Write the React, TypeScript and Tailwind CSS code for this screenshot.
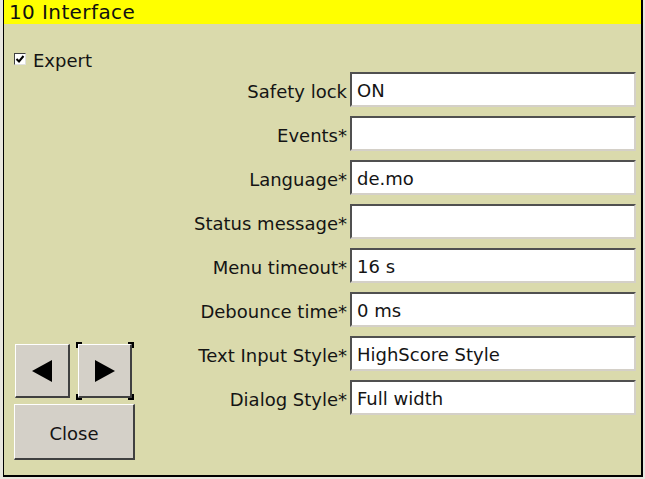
import React from "react";

const font = { fontFamily: '"DejaVu Sans", Verdana, sans-serif' };

function Field({ label, value }: { label: string; value: string }) {
  return (
    <div className="flex items-center justify-end h-[34px]">
      <span className="text-[18px] leading-none text-[#141414] mr-[3px] pt-[5px]">{label}</span>
      <div className="w-[286px] h-[35px] bg-white border-t-2 border-l-2 border-b-2 border-r-2 border-t-[#505050] border-l-[#505050] border-b-[#d4d0c8] border-r-[#d4d0c8] flex items-center pl-[5px] pt-[3px] text-[18px] leading-none text-[#141414]">
        {value}
      </div>
    </div>
  );
}

function Corner({ cls }: { cls: string }) {
  return <span className={`absolute w-[6px] h-[6px] border-black ${cls}`} />;
}

export default function App() {
  const rows: [string, string][] = [
    ["Safety lock", "ON"],
    ["Events*", ""],
    ["Language*", "de.mo"],
    ["Status message*", ""],
    ["Menu timeout*", "16 s"],
    ["Debounce time*", "0 ms"],
    ["Text Input Style*", "HighScore Style"],
    ["Dialog Style*", "Full width"],
  ];
  return (
    <div className="w-[645px] h-[479px] bg-[#e8e6de]" style={font}>
      <div className="ml-[3px] w-[640px] h-[477px] border-l border-r-2 border-b-2 border-black flex flex-col">
        <div className="h-[24px] bg-[#ffff00] flex items-center pl-[5px] text-[20px] leading-none tracking-[0.4px] text-[#111]">
          10 Interface
        </div>
        <div className="flex-1 bg-[#dadaac] flex">
          <div className="w-[140px] flex flex-col justify-between pt-[26px] pb-[15px] pl-[10px]">
            <div className="flex items-start">
              <div className="mt-[3px] w-[12px] h-[12px] bg-white border-t border-l border-[#404040] border-b border-r border-b-[#e0e0e0] border-r-[#e0e0e0] flex items-center justify-center">
                <svg width="10" height="10" viewBox="0 0 10 10">
                  <path d="M1.5 5 L4 7.5 L8.5 2" stroke="#000" strokeWidth="2" fill="none" />
                </svg>
              </div>
              <span className="ml-[7px] text-[18px] leading-none text-[#141414] pt-[2px]">Expert</span>
            </div>
            <div className="flex flex-col gap-[6px]">
              <div className="flex gap-[8px] pl-[1px]">
                <div className="w-[55px] h-[54px] bg-[#d4d0c8] border-t border-l border-white border-b-2 border-r-2 border-b-[#404040] border-r-[#404040] flex items-center justify-center">
                  <svg width="20" height="22" viewBox="0 0 20 22">
                    <path d="M0 11 L20 0 L20 22 Z" fill="#000" />
                  </svg>
                </div>
                <div className="relative w-[54px] h-[54px] bg-[#d4d0c8] border-t border-l border-white border-b-2 border-r-2 border-b-[#404040] border-r-[#404040] flex items-center justify-center">
                  <Corner cls="-top-[3px] -left-[3px] border-t-2 border-l-2" />
                  <Corner cls="-top-[3px] -right-[4px] border-t-2 border-r-2" />
                  <Corner cls="-bottom-[4px] -left-[3px] border-b-2 border-l-2" />
                  <Corner cls="-bottom-[4px] -right-[4px] border-b-2 border-r-2" />
                  <svg width="20" height="22" viewBox="0 0 20 22">
                    <path d="M20 11 L0 0 L0 22 Z" fill="#000" />
                  </svg>
                </div>
              </div>
              <div className="w-[121px] h-[56px] bg-[#d4d0c8] border-t border-l border-white border-b-2 border-r-2 border-b-[#404040] border-r-[#404040] flex items-center justify-center pt-[4px] text-[18px] leading-none text-[#141414]">
                Close
              </div>
            </div>
          </div>
          <div className="flex-1 flex flex-col gap-[10px] pt-[48px] pr-[5px]">
            {rows.map(([l, v]) => (
              <Field key={l} label={l} value={v} />
            ))}
          </div>
        </div>
      </div>
    </div>
  );
}
